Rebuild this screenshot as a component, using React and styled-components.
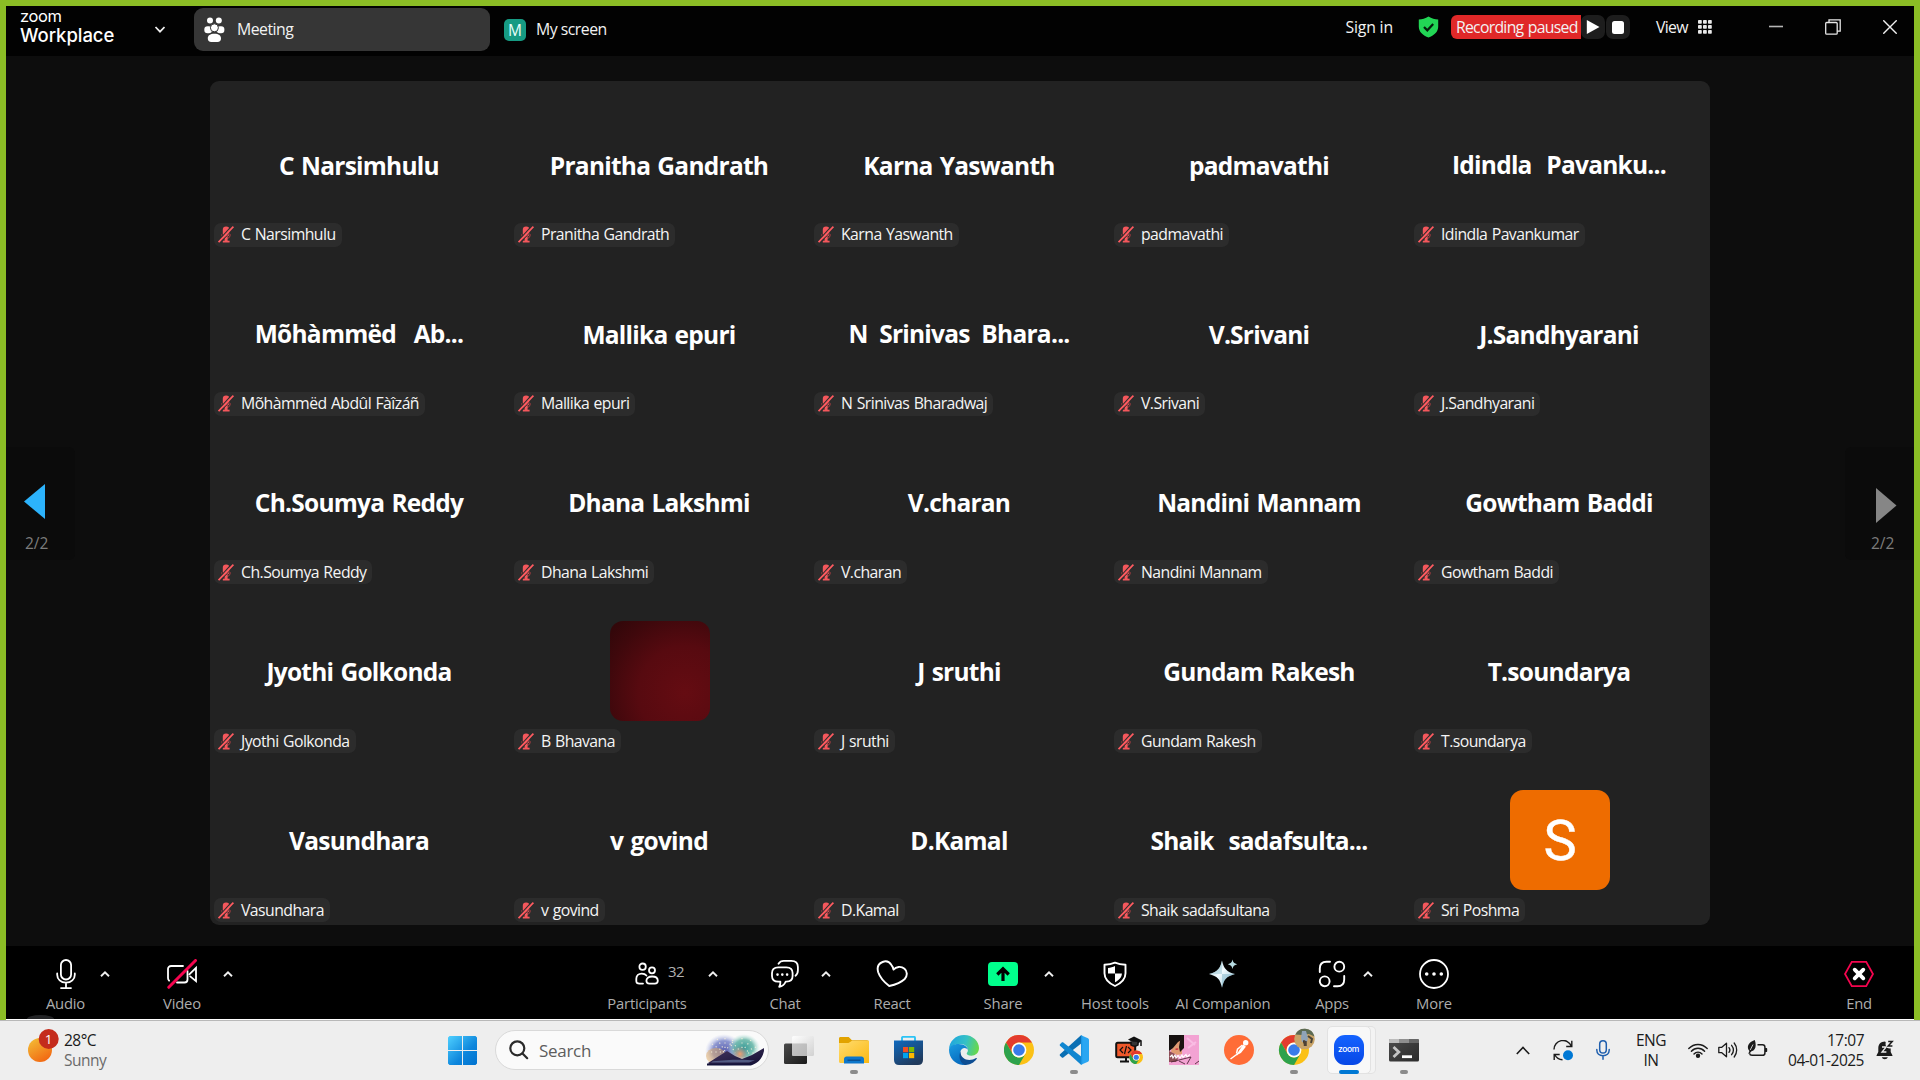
import React from "react";
import styled, { createGlobalStyle } from "styled-components";

const UI = `"Open Sans", "Noto Sans", sans-serif`;

const Global = createGlobalStyle`
  * { box-sizing: border-box; }
  html, body { margin: 0; padding: 0; background: #000; }
  body { font-family: ${UI}; overflow: hidden; }
  svg { display: block; flex: none; }
`;

const Screen = styled.div`
  width: 1920px;
  height: 1080px;
  display: flex;
  flex-direction: column;
  overflow: hidden;
`;

const Window = styled.div`
  height: 1020px;
  border: 6px solid #8bbd25;
  border-bottom: 0;
  background: #0d0d0d;
  display: flex;
  flex-direction: column;
`;

/* ---------- title bar ---------- */

const TitleBar = styled.header`
  height: 50px;
  flex: none;
  background: #020202;
  display: flex;
  justify-content: space-between;
  align-items: flex-start;
`;

const TitleLeft = styled.div`
  height: 47px;
  display: flex;
  align-items: center;
`;

const TitleRight = styled.div`
  height: 42px;
  display: flex;
  align-items: center;
  padding-right: 17px;
`;

const Brand = styled.div`
  width: 135px;
  padding: 0 0 4px 14px;
  font-family: Inter, sans-serif;
  color: #fff;
  white-space: nowrap;
`;

const BrandTop = styled.div`
  font-size: 16.5px;
  line-height: 15px;
  font-weight: 400;
  letter-spacing: -0.4px;
`;

const BrandBottom = styled.div`
  font-size: 18.5px;
  line-height: 23px;
  font-weight: 500;
  letter-spacing: -0.05px;
`;

const ActiveTab = styled.div`
  width: 296px;
  height: 43px;
  margin-left: 29px;
  padding-left: 10px;
  border-radius: 9px;
  background: #363636;
  display: flex;
  align-items: center;
  gap: 12px;
`;

const ScreenTab = styled.div`
  margin-left: 14px;
  display: flex;
  align-items: center;
  gap: 10px;
`;

const Initial = styled.div`
  width: 22px;
  height: 22px;
  border-radius: 5px;
  background: #169b83;
  color: #e9fffa;
  font-size: 15.5px;
  line-height: 22px;
  text-align: center;
`;

const BarText = styled.span`
  font-size: 15.8px;
  line-height: 22px;
  letter-spacing: -0.6px;
  margin-bottom: 1px;
  color: #f2f2f2;
  white-space: nowrap;
`;

const TabText = styled(BarText)`
  letter-spacing: -0.5px;
`;

const SignIn = styled(BarText)`
  letter-spacing: -0.2px;
  margin-bottom: 0;
`;

const Recording = styled.div`
  height: 24px;
  margin: 0 0 0 12px;
  padding: 0 5px;
  width: 130px;
  border-radius: 6px 0 0 6px;
  background: #e02828;
  display: flex;
  align-items: center;
`;

const RecordingText = styled(BarText)`
  letter-spacing: -0.72px;
  word-spacing: 1px;
`;

const MediaButton = styled.div`
  width: 24px;
  height: 24px;
  margin-right: 1px;
  border-radius: 7px;
  background: #1d1d1d;
  display: flex;
  align-items: center;
  justify-content: center;
`;

const View = styled.div`
  margin: 0 57px 0 25px;
  display: flex;
  align-items: center;
  gap: 10px;
`;

const WindowButtons = styled.div`
  display: flex;
  align-items: center;
  gap: 42px;
  padding-bottom: 1px;
`;

/* ---------- gallery ---------- */

const Stage = styled.main`
  height: 890px;
  flex: none;
  padding-top: 25px;
  display: flex;
  justify-content: space-between;
  align-items: flex-start;
`;

const Pager = styled.div`
  width: 69px;
  height: 113px;
  margin-top: 366px;
  background: #0b0b0b;
  border-radius: ${(p) => (p.$right ? "6px 0 0 6px" : "0 6px 6px 0")};
  padding: ${(p) => (p.$right ? "41px 0 0 31px" : "37px 0 0 18px")};
  display: flex;
  flex-direction: column;
  align-items: flex-start;
`;

const PageCount = styled.span`
  font-size: 15.5px;
  line-height: 20px;
  color: #7c7c7c;
  margin: ${(p) => (p.$right ? "10px 0 0 -5px" : "14px 0 0 1px")};
`;

const Gallery = styled.section`
  width: 1500px;
  height: 844px;
  border-radius: 9px;
  background: #222222;
  display: grid;
  grid-template-columns: repeat(5, 1fr);
  grid-template-rows: repeat(5, 1fr);
`;

const Tile = styled.article`
  position: relative;
  display: flex;
  align-items: center;
  justify-content: center;
`;

const BigName = styled.h2`
  margin: 0;
  font-size: 24.5px;
  line-height: 34px;
  font-weight: 700;
  letter-spacing: -0.75px;
  color: #fff;
  white-space: nowrap;
  word-spacing: ${(p) => p.$ws || 1.5}px;
  padding: ${(p) => (p.$ws ? 0 : 1)}px 2px 0 0;
`;

const NameTag = styled.div`
  position: absolute;
  left: 4px;
  bottom: 3px;
  height: 24px;
  padding: 0 6px 0 4px;
  border-radius: 7px;
  background: #2c2c2c;
  display: flex;
  align-items: center;
  gap: 7px;
`;

const TagText = styled.span`
  font-size: 15.8px;
  line-height: 25px;
  letter-spacing: -0.55px;
  word-spacing: 0.8px;
  color: #f5f5f5;
  white-space: nowrap;
`;

const Avatar = styled.div`
  width: 100px;
  height: 100px;
  margin-bottom: 1px;
  border-radius: 13px;
`;

const PhotoAvatar = styled(Avatar)`
  background: radial-gradient(circle at 75% 72%, #650c12 0%, #570a10 45%, #3f080c 75%, #2e0709 100%);
`;

const LetterAvatar = styled(Avatar)`
  background: #ee6c00;
  color: #fff;
  font-family: Roboto, sans-serif;
  font-size: 56px;
  font-weight: 400;
  -webkit-text-stroke: 0.4px #fff;
  line-height: 102px;
  text-align: center;
`;

/* ---------- meeting toolbar ---------- */

const Toolbar = styled.footer`
  position: relative;
  height: 74px;
  flex: none;
  background: #000;
  border-bottom: 1px solid #fff;
  padding-top: 13px;
  display: flex;
  align-items: flex-start;
`;

const Tool = styled.div`
  width: ${(p) => p.$w || 60}px;
  margin-left: ${(p) => p.$ml}px;
  flex: none;
  display: flex;
  flex-direction: column;
  align-items: center;
  gap: 4px;
`;

const ToolIcon = styled.div`
  position: relative;
  height: 30px;
  display: flex;
  align-items: center;
`;

const ToolLabel = styled.span`
  font-size: 14.8px;
  line-height: 21px;
  font-weight: 500;
  letter-spacing: -0.2px;
  color: #adadad;
  white-space: nowrap;
`;

const Count = styled.span`
  position: absolute;
  left: 33px;
  top: 2px;
  font-size: 15px;
  line-height: 20px;
  letter-spacing: -0.6px;
  color: #b0b0b0;
`;

const Caret = styled.div`
  width: 10px;
  flex: none;
  margin: 11px 0 0 ${(p) => p.$ml}px;
`;

const HiddenHandle = styled.div`
  position: absolute;
  left: 21px;
  bottom: 0;
  width: 27px;
  height: 4px;
  border-radius: 14px 14px 0 0 / 4px 4px 0 0;
  background: #232426;
`;

/* ---------- taskbar ---------- */

const Taskbar = styled.nav`
  height: 60px;
  flex: none;
  border-top: 1px solid #b8b8b8;
  background: #eeeeee;
  padding-bottom: 1px;
  display: flex;
  align-items: center;
`;

const Weather = styled.div`
  width: 448px;
  padding-left: 28px;
  display: flex;
  align-items: center;
  gap: 4px;
`;

const WeatherIcon = styled.div`
  margin-bottom: 8px;
`;

const TextStack = styled.div`
  width: ${(p) => p.$w || "auto"};
  margin-left: ${(p) => p.$ml || 0}px;
  margin-bottom: ${(p) => (p.$mb === undefined ? 1 : p.$mb)}px;
  text-align: ${(p) => p.$align || "left"};
  font-size: 15.5px;
  line-height: 20px;
  letter-spacing: ${(p) => p.$ls || "-0.5px"};
  color: #1b1b1b;
  white-space: nowrap;
`;

const Muted = styled.div`
  color: #6a6a6a;
`;

const Search = styled.div`
  width: 274px;
  height: 40px;
  margin-left: 18px;
  padding: 0 3px 0 13px;
  border: 1px solid #d9d9d9;
  border-radius: 20px;
  background: #fafafa;
  display: flex;
  align-items: center;
  overflow: hidden;
`;

const SearchText = styled.span`
  flex: 1;
  margin: 1px 0 0 10px;
  font-size: 17px;
  line-height: 22px;
  letter-spacing: -0.3px;
  color: #5d5d5d;
`;

const Apps = styled.div`
  display: flex;
  margin-left: 2px;
`;

const AppSlot = styled.div`
  position: relative;
  width: 55px;
  height: 48px;
  display: flex;
  align-items: center;
  justify-content: center;
`;

const ActivePlate = styled.div`
  width: 44px;
  height: 48px;
  border-radius: 5px;
  background: #f8f8f8;
  border: 1px solid #e2e2e2;
  box-shadow: 5px 0 0 -1px #f3f3f3, 5px 0 0 0 #e2e2e2;
  display: flex;
  align-items: center;
  justify-content: center;
`;

const RunMark = styled.i`
  position: absolute;
  bottom: 0;
  width: ${(p) => (p.$active ? 20 : 8)}px;
  height: 4px;
  border-radius: 2px;
  background: ${(p) => (p.$active ? "#0078d4" : "#8a8a8a")};
`;

const ZoomIcon = styled.div`
  width: 30px;
  height: 30px;
  border-radius: 11px;
  background: linear-gradient(#1463ff, #0747e6);
  color: #fff;
  font-family: Inter, sans-serif;
  font-size: 8.5px;
  font-weight: 500;
  letter-spacing: -0.3px;
  line-height: 28px;
  text-align: center;
`;

const TrayIcon = styled.div`
  margin-left: ${(p) => p.$ml}px;
  margin-bottom: ${(p) => p.$up || 0}px;
`;

/* ---------- icons ---------- */

const MicOff = () => (
  <svg width="16" height="17" viewBox="0 0 16 17">
    <rect x="4.800" y="0.600" width="6.600" height="10" rx="3.200" fill="#f4575c" />
    <path d="M3.600 8.200c.2 3 1.900 4.200 4.400 4.200s4.200-1.200 4.400-4.200" fill="none" stroke="#8f3a3d" strokeWidth="1.200" />
    <path d="M8.100 10.500v4.800" stroke="#f4575c" strokeWidth="3" />
    <path d="M4.800 15.600h6.800" stroke="#f4575c" strokeWidth="1.800" />
    <path d="M.2 15 14-.2" stroke="#2c2c2c" strokeWidth="1.300" />
    <path d="M2 17.200 15.800 2.200" stroke="#2c2c2c" strokeWidth="1" />
    <path d="M.6 16.200 15.400.6" stroke="#ff5b61" strokeWidth="1.700" />
  </svg>
);

const Up = () => (
  <svg width="10" height="8" viewBox="0 0 10 8">
    <path d="M1 6.2 5 2.4l4 3.8" fill="none" stroke="#f0f0f0" strokeWidth="1.9" />
  </svg>
);

const Line = ({ w, h, children, sw = 2 }) => (
  <svg width={w} height={h} viewBox={`0 0 ${w} ${h}`} fill="none" stroke="#fff" strokeWidth={sw} strokeLinecap="round" strokeLinejoin="round">
    {children}
  </svg>
);

const AudioIcon = () => (
  <Line w={20} h={30} sw={1.8}>
    <rect x="4.9" y="1" width="10.2" height="19.5" rx="5.1" />
    <path d="M1.2 14.5v1.2c0 4.6 3.6 8 8.8 8s8.8-3.4 8.8-8v-1.2M10 23.7V29M5 29.1h10" />
  </Line>
);

const VideoIcon = () => (
  <Line w={30} h={30} sw={1.8}>
    <path d="M16 7H4.2C2.2 7 1 8.200 1 10v9c0 1.200.4 2 1.100 2.700M10 23.500h7.500c2 0 3-1 3-3V12" />
    <path d="M22.300 15.300 29 8.800v13.400l-5.800-4.800" strokeLinejoin="miter" />
    <path d="M1.800 28.300 28.500 1.500" stroke="#f5054f" strokeWidth="3" />
  </Line>
);

const PeopleIcon = () => (
  <Line w={24} h={24} sw={1.8}>
    <circle cx="7.600" cy="4.700" r="3.200" />
    <circle cx="17" cy="8.300" r="3" />
    <path d="M8 21.600H4.500C2.500 21.600 1.300 20.600 1.300 19v-2.200c0-3.200 2.400-5.200 5.500-5.200 2 0 3.600.600 4.600 1.900" />
    <path d="M11.400 18.800c0-2.500 2-4.300 5.700-4.300s5.700 1.800 5.700 4.300c0 1.900-1.100 2.800-3 2.800h-5.400c-1.900 0-3-.900-3-2.800z" />
  </Line>
);

const ChatIcon = () => (
  <Line w={28} h={30} sw={1.8}>
    <path d="M7.500 4.800C8.600 2.900 10.300 1.900 12.800 1.900h7.500c4.300 0 6.600 2.300 6.600 6.200v3.200c0 2.500-.7 4.200-2.400 5.400" />
    <path d="M7.200 8.300h8.200c4 0 6.200 2.200 6.200 5.800v3c0 3.600-2.200 5.600-6.200 5.600h-.8c-1 2.600-3.200 4.500-6.400 5.100 1-1.400 1.300-3 1.200-5.100H7.200C3.200 22.700 1 20.700 1 17.100v-3c0-3.600 2.200-5.800 6.200-5.800z" />
    <path d="M6.500 15.600h.01M11.300 15.600h.01M16.100 15.600h.01" strokeWidth="2.600" />
  </Line>
);

const HeartIcon = () => (
  <Line w={32} h={28} sw={1.9}>
    <path d="M15.300 4.800C13.300 1.800 9.800.700 6.600 2 2.300 3.700.900 7.800 2.200 12.200 4 17.600 8.500 22.300 13.200 26c6-1.300 12-3.600 15.500-7 3-3.200 2.700-7.800-.2-10.200C25 5.800 20 6.600 17.500 9.600c-.3-1.900-1-3.500-2.200-4.800z" />
  </Line>
);

const ShareIcon = () => (
  <svg width="30" height="24" viewBox="0 0 30 24">
    <rect width="30" height="24" rx="4" fill="#00ff8c" />
    <path d="M15 19V7M9.300 12.500 15 6.800l5.700 5.700" fill="none" stroke="#000" strokeWidth="3.200" />
  </svg>
);

const ShieldIcon = () => (
  <svg width="24" height="26" viewBox="0 0 24 26">
    <path d="M12 1.600C9 2.900 5.500 3.600 1.500 3.700v8.500c0 6 4.500 10 10.500 12.800 6-2.800 10.500-6.800 10.500-12.800V3.700C18.500 3.600 15 2.900 12 1.600z" fill="none" stroke="#fff" strokeWidth="1.900" strokeLinejoin="round" />
    <path d="M12 5v7.500H5V7c2.600-.200 5-.900 7-2zM12 12.500h6.900c-.1 3.800-2.800 6.700-6.900 8.800z" fill="#fff" />
  </svg>
);

const SparkIcon = () => (
  <svg width="30" height="30" viewBox="0 0 30 30">
    <defs>
      <linearGradient id="sparkA" x1="0" y1="0" x2="1" y2="1">
        <stop offset="0" stopColor="#8fb9c6" />
        <stop offset=".45" stopColor="#f2fbff" />
        <stop offset="1" stopColor="#8fc0d2" />
      </linearGradient>
    </defs>
    <path d="M14 1.500c2 8.500 4.500 11.300 13 13.600-8.500 2.300-11 5-13 13.600C12 20.100 9.500 17.400 1 15.100 9.500 12.800 12 10 14 1.500z" fill="url(#sparkA)" />
    <path d="M14 1.500v13.600L1 15.100C9.500 12.800 12 10 14 1.500z" fill="#a8cfdb" opacity=".6" />
    <path d="M14 28.700V15.100h13c-8.500 2.300-11 5-13 13.600z" fill="#7fb3c8" opacity=".5" />
    <path d="M24.500.500c.7 3 1.700 4 4.700 4.700-3 .8-4 1.700-4.700 4.700-.700-3-1.700-3.900-4.700-4.700 3-.700 4-1.700 4.700-4.700z" fill="#b7dbe2" />
  </svg>
);

const AppsIcon = () => (
  <Line w={28} h={28} sw={1.9}>
    <circle cx="21.300" cy="6.700" r="4.900" />
    <circle cx="6.700" cy="21.300" r="4.900" />
    <path d="M1.800 12V8.500c0-4.300 2.400-6.700 6.700-6.700H12M16 26.200h3.500c4.300 0 6.700-2.400 6.700-6.700V16" />
  </Line>
);

const MoreIcon = () => (
  <Line w={30} h={30} sw={1.8}>
    <circle cx="15" cy="15" r="14" />
    <path d="M7.700 15h.01M15 15h.01M22.300 15h.01" strokeWidth="3.600" />
  </Line>
);

const EndIcon = () => (
  <Line w={30} h={30} sw={1.8}>
    <path d="M7.800 2.800h14.400L29 15l-6.800 12.200H7.800L1 15z" stroke="#f5054f" strokeLinejoin="miter" />
    <path d="m10.700 10.700 8.600 8.600M19.300 10.700l-8.600 8.600" strokeWidth="3.800" />
  </Line>
);

const MeetingIcon = () => (
  <svg width="21" height="26" viewBox="0 0 21 26" fill="#fff">
    <circle cx="6" cy="3.600" r="3" />
    <circle cx="14.800" cy="3.600" r="3" />
    <rect x=".3" y="9.300" width="7.700" height="7" rx="3.300" />
    <rect x="12.700" y="9.300" width="7.700" height="7" rx="3.300" />
    <circle cx="10.400" cy="10.800" r="4" stroke="#363636" strokeWidth="1" />
    <path d="M3.800 21.400c0-2.900 2.400-4.600 6.600-4.600s6.600 1.700 6.600 4.600c0 2.300-1.200 3.500-3.500 3.500H7.300c-2.300 0-3.500-1.200-3.500-3.500z" />
  </svg>
);

const SafeIcon = () => (
  <svg width="21" height="22" viewBox="0 0 21 22">
    <path d="M10.500.4C7.500 2.300 4 3.300.8 3.500v7.300c0 5.200 4.200 8.700 9.700 10.800 5.500-2.100 9.700-5.600 9.700-10.800V3.500C17 3.300 13.500 2.300 10.500.4z" fill="#22d655" />
    <path d="m6 11 3.300 3.300 5.900-6.300" fill="none" stroke="#04200c" strokeWidth="2.200" />
  </svg>
);

const GridIcon = () => (
  <svg width="14" height="14" viewBox="0 0 14 14" fill="#e8e8e8">
    {[0, 5, 10].map((y) => [0, 5, 10].map((x) => <rect key={`${x}-${y}`} x={x} y={y} width="3.800" height="3.800" rx=".8" />))}
  </svg>
);

const Sunny = () => (
  <svg width="32" height="34" viewBox="0 0 32 34">
    <defs>
      <linearGradient id="sun" x1=".2" y1="0" x2=".8" y2="1">
        <stop offset="0" stopColor="#f3bb35" />
        <stop offset="1" stopColor="#f2620f" />
      </linearGradient>
    </defs>
    <circle cx="12" cy="21" r="12" fill="url(#sun)" />
    <circle cx="20.700" cy="10" r="10" fill="#c42b1c" />
    <text x="20.700" y="14.800" fontSize="13.500" textAnchor="middle" fill="#fff" fontFamily="Open Sans, sans-serif">1</text>
  </svg>
);

const WindowsLogo = () => (
  <svg width="29" height="29" viewBox="0 0 29 29">
    <defs>
      <linearGradient id="win" gradientUnits="userSpaceOnUse" x1="0" y1="0" x2="29" y2="29">
        <stop offset="0" stopColor="#4fd0ff" />
        <stop offset=".6" stopColor="#0d86dc" />
        <stop offset="1" stopColor="#0072cf" />
      </linearGradient>
    </defs>
    <path fill="url(#win)" d="M1.500 0H14v14H0V1.500zM15 0h12.500L29 1.500V14H15zM0 15h14v14H1.500L0 27.500zM15 15h14v12.500L27.500 29H15z" />
  </svg>
);

const Magnifier = () => (
  <svg width="20" height="20" viewBox="0 0 20 20" fill="none" stroke="#2a2a2a" strokeWidth="2.200" strokeLinecap="round">
    <circle cx="8.300" cy="8.300" r="7" />
    <path d="m13.500 13.500 4.700 4.700" />
  </svg>
);

const NightScene = () => (
  <svg width="61" height="32" viewBox="0 0 61 32">
    <defs>
      <radialGradient id="burstA"><stop offset="0" stopColor="#5a5fae" /><stop offset=".6" stopColor="#7b86c9" stopOpacity=".85" /><stop offset="1" stopColor="#c5cbf0" stopOpacity="0" /></radialGradient>
      <radialGradient id="burstB"><stop offset="0" stopColor="#3a9b98" /><stop offset=".6" stopColor="#64b5a6" stopOpacity=".85" /><stop offset="1" stopColor="#bfe8df" stopOpacity="0" /></radialGradient>
      <radialGradient id="glow"><stop offset="0" stopColor="#f0a070" /><stop offset="1" stopColor="#b07880" stopOpacity="0" /></radialGradient>
      <linearGradient id="hill" x1="0" y1="0" x2="1" y2="1"><stop offset="0" stopColor="#463660" /><stop offset="1" stopColor="#120f33" /></linearGradient>
    </defs>
    <ellipse cx="20" cy="17" rx="19" ry="17" fill="url(#burstA)" />
    <ellipse cx="40" cy="14" rx="16" ry="14" fill="url(#burstB)" />
    <ellipse cx="12" cy="22" rx="10" ry="8" fill="#dda860" opacity=".5" />
    <circle cx="36" cy="20" r="8" fill="url(#glow)" />
    <g stroke="#f9f3dc" strokeWidth="1.100" strokeDasharray="1.200 3.200" opacity=".9">
      <path d="m8 10 12 8M13 5l8 12M21 4v12M29 6l-7 10M7 18h10M28 8l8 9M38 4v12M47 6l-8 10M52 13l-11 5M44 19h9M27 11l4 8" />
    </g>
    <path d="m4 29 11-7 8-5 8 5 7 3 10-4 12-7v3c-2 9-7 13-14 14H6z" fill="url(#hill)" />
    <path d="M9 27.300c14-2 32-2 42-1l-6 2.200H7z" fill="#5d6a92" opacity=".8" />
    <path d="M3 29.500h48l-4 2H3z" fill="#15143c" />
  </svg>
);

const TaskView = () => (
  <svg width="30" height="29" viewBox="0 0 30 29">
    <defs>
      <linearGradient id="tvA" x1="0" y1="0" x2="1" y2="1"><stop offset="0" stopColor="#4a4a4a" /><stop offset="1" stopColor="#1a1a1a" /></linearGradient>
      <linearGradient id="tvB" x1="0" y1="0" x2="1" y2="1"><stop offset="0" stopColor="#fff" /><stop offset="1" stopColor="#cfcfcf" /></linearGradient>
    </defs>
    <rect x="0" y="7.500" width="23" height="20.500" rx="1.500" fill="url(#tvA)" />
    <rect x="8" y="0" width="22" height="20" rx="1.500" fill="url(#tvB)" opacity=".93" />
    <path d="M8 7.500h15V20H8z" fill="#a9a9a9" opacity=".55" />
  </svg>
);

const Explorer = () => (
  <svg width="30" height="27" viewBox="0 0 30 27">
    <defs><linearGradient id="fold" x1="0" y1="0" x2="1" y2="1"><stop offset="0" stopColor="#ffdc70" /><stop offset="1" stopColor="#fbb912" /></linearGradient></defs>
    <path d="M0 1.500C0 .6.600 0 1.500 0h8.200l3.200 3.300H28c1.200 0 2 .7 2 1.700v6H0z" fill="#e2a300" />
    <path d="M0 6h9.500L13 3.800h17V26H1.500C.6 26 0 25.400 0 24.500z" fill="url(#fold)" />
    <path d="M5 26.500V22c0-1.600 1.100-2.600 2.600-2.600h14.800c1.500 0 2.600 1 2.600 2.600v4.500z" fill="#0e77cb" />
    <path d="M8.500 23.200h13" stroke="#0b4b8a" strokeWidth="1.300" />
  </svg>
);

const Store = () => (
  <svg width="29" height="29" viewBox="0 0 29 29">
    <defs><linearGradient id="bag" x1="0" y1="0" x2=".6" y2="1"><stop offset="0" stopColor="#0f6abf" /><stop offset="1" stopColor="#203a5c" /></linearGradient></defs>
    <path d="M8 6V1.800C8 1.200 8.400.9 9 .9h11c.6 0 1 .3 1 .9V6" fill="none" stroke="#2cc3f5" strokeWidth="1.900" />
    <path d="M0 4.500h29V24c0 3-1.800 5-5 5H5c-3.200 0-5-2-5-5z" fill="url(#bag)" />
    <rect x="9" y="11" width="5.200" height="5.200" fill="#f25022" /><rect x="15" y="11" width="5.200" height="5.200" fill="#7fba00" />
    <rect x="9" y="17" width="5.200" height="5.200" fill="#00a4ef" /><rect x="15" y="17" width="5.200" height="5.200" fill="#ffb900" />
  </svg>
);

const Edge = () => (
  <svg width="30" height="30" viewBox="0 0 30 30">
    <defs>
      <linearGradient id="edA" x1="0" y1=".3" x2="1" y2=".5"><stop offset="0" stopColor="#1fa5e0" /><stop offset=".55" stopColor="#35c1c5" /><stop offset="1" stopColor="#68d84b" /></linearGradient>
      <linearGradient id="edB" x1="0" y1="0" x2=".5" y2="1"><stop offset="0" stopColor="#1b9de2" /><stop offset="1" stopColor="#0669bd" /></linearGradient>
    </defs>
    <path d="M0 15C0 6 7 0 15 0c9 0 15 6.500 15 13 0 5-3.800 7.700-7.600 7.700-3 0-4.700-1-4.700-2.100 0-.8 1.200-1.300 1.200-3.600 0-3-3-6-7.400-6C5.500 9 0 12 0 15z" fill="url(#edA)" />
    <path d="M0 14.800C.4 11 4.500 8.900 9.500 8.900c5.500 0 9.200 2.900 9.400 6-1.300-2-4-2.600-6-.8-3.700 3.300-1.500 11.500 7 14.200C17.800 29.600 16 30 14 30 6 29.500 0 23 0 14.800z" fill="url(#edB)" />
    <path d="M11.700 16.300c-.8 5 3.300 8.700 8.700 8.700 2.500 0 4.800-.700 6.700-1.900.5-.2.900.2.600.7C25 28 20 30.300 15.500 29.900 10 27 9.500 20 11.700 16.300z" fill="#0d4d92" />
  </svg>
);

const ChromeMark = () => (
  <>
    <circle cx="15" cy="15" r="15" fill="#fbc116" />
    <path d="M2 7.500A15 15 0 0 1 28 7.500H15a7.500 7.500 0 0 0-6.500 11.200z" fill="#e33b2e" />
    <path d="M2 7.500 8.500 18.800A7.500 7.500 0 0 0 21.500 18.700L15 30A15 15 0 0 1 2 7.500z" fill="#2da24c" />
    <circle cx="15" cy="15" r="7.400" fill="#fff" />
    <circle cx="15" cy="15" r="5.800" fill="#3a7bea" />
  </>
);

const Chrome = () => (
  <svg width="30" height="30" viewBox="0 0 30 30">
    <ChromeMark />
  </svg>
);

const VSCode = () => (
  <svg width="30" height="30" viewBox="0 0 30 30">
    <path d="m22 .3 7 3c.6.300 1 .9 1 1.500v20.400c0 .6-.4 1.200-1 1.500l-7 3z" fill="#2aa6f2" />
    <path d="M22 .3 1 19.200c-.5.500-.5 1.100 0 1.600l1.800 1.600c.5.400 1 .4 1.500.1L22.500 8.200z" fill="#0a6fb3" />
    <path d="M22 29.700 1 10.800c-.5-.5-.5-1.100 0-1.600l1.800-1.600c.5-.4 1-.4 1.500-.1l18.200 14.300z" fill="#1086d0" />
    <path d="M22 .3v29.400c.5 0 .9-.2 1.200-.5V.8c-.3-.3-.7-.5-1.200-.5z" fill="#1d95e2" />
  </svg>
);

const CodeLearn = () => (
  <svg width="28" height="28" viewBox="0 0 28 28">
    <rect x="1.200" y="6.700" width="19" height="14.600" rx="1.500" fill="#f0582a" stroke="#111" strokeWidth="2" />
    <path d="M11 21v4M5 25.600h9" stroke="#111" strokeWidth="2" />
    <path d="m8 11-3 3 3 3M13 11l3 3-3 3M11.500 10l-2 8" stroke="#111" strokeWidth="1.200" fill="none" />
    <path d="M13 3.500 19 .5l8 4-5 4z" fill="#111" />
    <path d="M16 5.500v3.500c2 1.500 5 1.500 7 0V6M26 5v5" stroke="#111" strokeWidth="1.500" fill="#333" />
    <g transform="translate(14.500 14.500) scale(.45)">
      <ChromeMark />
    </g>
  </svg>
);

const PinkArt = () => (
  <svg width="30" height="30" viewBox="0 0 30 30">
    <rect width="30" height="30" fill="#f3a3d3" />
    <path d="M4 6h9v13l-5 1-6-3z" fill="#e09a72" />
    <path d="M0 0h14v4L9 7 4 13l-4 3z" fill="#15100f" />
    <path d="M12 0h3v13l-4 4-1-5z" fill="#1c1211" />
    <path d="M6 14c1.500-1 3-.8 3.500 0-.8 1.200-2.500 1.300-3.500 0z" fill="#cf3040" />
    <path d="M0 16l6 3 3 5-2 3H0z" fill="#8d4d56" />
    <path d="m1 22 2-2 1 3 2-3 1 3 2-2.500 2 2.500 2-3 1 2.500 3-3 1 2.500 3-2.500" stroke="#fff" strokeWidth="1.200" fill="none" />
    <path d="m2 27 20-5-4 7M10 26l6 3M26 29l4-3" stroke="#51293a" strokeWidth=".9" fill="none" />
    <path d="m18 3 8 7M19 13l8-6" stroke="#f9bde3" strokeWidth="2" />
  </svg>
);

const Postman = () => (
  <svg width="30" height="30" viewBox="0 0 30 30">
    <circle cx="15" cy="15" r="15" fill="#ff6c37" />
    <circle cx="21.700" cy="7.800" r="2.700" fill="#fff" />
    <path d="m19.300 9.200 2.600 2.600-5 6.300-2.300 1-.3-1.300-1.800 1.600z" fill="#fff" />
    <path d="m18.500 10-5 4.200-1 4.300M14 18.500 6.500 24M16 17l-3.500 3" stroke="#fff" strokeWidth="1.500" fill="none" />
  </svg>
);

const ChromeProfile = () => (
  <svg width="42" height="44" viewBox="0 0 42 44">
    <g transform="translate(6 7)">
      <ChromeMark />
    </g>
    <circle cx="31.500" cy="11" r="10.300" fill="#c9a468" />
    <path d="M22.300 6.500A10.300 10.300 0 0 1 41.500 8.500L36 6l-7 1z" fill="#5c6b54" />
    <path d="M29 3h4l2 7-1 4h-5l-1-4z" fill="#8fa3b8" />
    <path d="M30 13h1.500v5M33 13v5" stroke="#4d4236" strokeWidth="1.500" />
    <path d="m35 8 4 3-1 4" stroke="#4a4438" strokeWidth="2" fill="none" />
  </svg>
);

const Terminal = () => (
  <svg width="30" height="23" viewBox="0 0 30 23">
    <defs><linearGradient id="term" x1="0" y1="0" x2="1" y2="1"><stop offset="0" stopColor="#4c4c4c" /><stop offset="1" stopColor="#2b2b2b" /></linearGradient></defs>
    <rect width="30" height="22.500" rx="1.500" fill="url(#term)" />
    <path d="M0 1.500C0 .6.600 0 1.500 0H10v4H0z" fill="#bcbcbc" />
    <path d="M10 0h10v4H10z" fill="#8f8f8f" />
    <path d="M20 0h8.500c.9 0 1.500.6 1.500 1.500V4H20z" fill="#666" />
    <path d="m4.500 8 5.300 5-5.300 5" fill="none" stroke="#c4c4c4" strokeWidth="2.800" />
    <path d="M13 17.700h10" stroke="#fff" strokeWidth="2.800" />
  </svg>
);

const SyncIcon = () => (
  <svg width="21" height="21" viewBox="0 0 21 21" fill="none" stroke="#1b1b1b" strokeWidth="1.400">
    <path d="M1 9.500A9 9 0 0 1 18.300 6M18.800.8v5.700h-5.600" />
    <path d="M1.200 20v-5.500h5.500M1.800 14.800C3.300 17.700 6 19.600 9.500 19.700" />
    <circle cx="15" cy="15.200" r="5" fill="#0078d4" stroke="none" />
  </svg>
);

const BlueMic = () => (
  <svg width="14" height="20" viewBox="0 0 14 20" fill="none" stroke="#1f5fae" strokeWidth="1.500" strokeLinecap="round">
    <rect x="3.700" y=".8" width="6.600" height="12.200" rx="3.300" />
    <path d="M.8 9.500v.6c0 3.200 2.600 5.600 6.200 5.600s6.200-2.400 6.200-5.600v-.6M7 16v3.200" />
  </svg>
);

const Wifi = () => (
  <svg width="20" height="15" viewBox="0 0 20 15" fill="none" stroke="#1b1b1b" strokeWidth="1.400" strokeLinecap="round">
    <path d="M.8 5.600C6 .1 14 .1 19.200 5.600M3.400 8.300c3.700-4 9.500-4 13.200 0M6 11c2.200-2.500 5.800-2.500 8 0" />
    <circle cx="10" cy="12.700" r="1.500" fill="#1b1b1b" />
  </svg>
);

const Sound = () => (
  <svg width="20" height="16" viewBox="0 0 20 16" fill="none" stroke="#1b1b1b" strokeWidth="1.300" strokeLinecap="round" strokeLinejoin="round">
    <path d="M.8 5.300h3L8.500 1.200v13.600l-4.700-4.100h-3z" />
    <path d="M11 5.600c1.100 1.400 1.100 3.400 0 4.800M13.600 3.300c2.200 2.800 2.200 6.600 0 9.400M16.200 1c3.300 4.200 3.300 9.800 0 14" />
  </svg>
);

const Battery = () => (
  <svg width="21" height="18" viewBox="0 0 21 18">
    <path d="M10.500 4.700h5c1.500 0 2.400.9 2.400 2.400v5.800c0 1.500-.9 2.400-2.400 2.400H5c-1.300 0-2.200-.7-2.400-1.900" fill="none" stroke="#1b1b1b" strokeWidth="1.500" />
    <path d="M18 8h1.200c.7 0 1 .4 1 1v2c0 .6-.3 1-1 1H18z" fill="#1b1b1b" />
    <path d="M7.800 0C9.500 5 9 10.500 4.500 11.200L2 14l-.6-.5 1-2.500C-.5 8 .5 2.500 7.800 0z" fill="#1b1b1b" />
    <path d="M6 4.500 3.200 10" stroke="#eee" strokeWidth=".8" />
  </svg>
);

const Bell = () => (
  <svg width="18" height="20" viewBox="0 0 18 20">
    <path d="M9 1.500c-4.200 0-6.700 2.800-6.700 6.500v4L.6 15.200c-.2.500 0 .9.600.9h14.600c.6 0 .8-.4.600-.9L14.700 12V8" fill="#1b1b1b" />
    <path d="M5.800 17.300c.4 1.300 1.500 2 3 2s2.600-.7 3-2z" fill="#1b1b1b" />
    <path d="M6 7h4.200L6 12h4.400" fill="none" stroke="#eee" strokeWidth="1.300" />
    <circle cx="14" cy="4" r="4.500" fill="#eee" />
    <path d="M12.200 1.500h4L12.200 6h4.200" fill="none" stroke="#1b1b1b" strokeWidth="1.500" />
  </svg>
);

/* ---------- data ---------- */

const people = [
  { name: "C Narsimhulu" },
  { name: "Pranitha Gandrath" },
  { name: "Karna Yaswanth" },
  { name: "padmavathi" },
  { name: "Idindla Pavankumar", cut: "Idindla Pavanku...", ws: 9 },
  { name: "Mõhàmmëd Abdûl Fàîzáñ", cut: "Mõhàmmëd Ab...", ws: 12 },
  { name: "Mallika epuri" },
  { name: "N Srinivas Bharadwaj", cut: "N Srinivas Bhara...", ws: 6 },
  { name: "V.Srivani" },
  { name: "J.Sandhyarani" },
  { name: "Ch.Soumya Reddy" },
  { name: "Dhana Lakshmi" },
  { name: "V.charan" },
  { name: "Nandini Mannam" },
  { name: "Gowtham Baddi" },
  { name: "Jyothi Golkonda" },
  { name: "B Bhavana", photo: true },
  { name: "J sruthi" },
  { name: "Gundam Rakesh" },
  { name: "T.soundarya" },
  { name: "Vasundhara" },
  { name: "v govind" },
  { name: "D.Kamal" },
  { name: "Shaik sadafsultana", cut: "Shaik sadafsulta...", ws: 9 },
  { name: "Sri Poshma", letter: "S" },
];

const tools = [
  { label: "Audio", w: 61, ml: 29, icon: <AudioIcon />, caret: 4 },
  { label: "Video", ml: 42, icon: <VideoIcon />, caret: 11 },
  { label: "Participants", w: 100, ml: 364, icon: <PeopleIcon />, count: "32", caret: 11 },
  { label: "Chat", ml: 37, icon: <ChatIcon />, caret: 6 },
  { label: "React", ml: 31, icon: <HeartIcon /> },
  { label: "Share", ml: 51, icon: <ShareIcon />, caret: 11 },
  { label: "Host tools", w: 100, ml: 11, icon: <ShieldIcon /> },
  { label: "AI Companion", w: 110, ml: 3, icon: <SparkIcon /> },
  { label: "Apps", ml: 24, icon: <AppsIcon />, caret: 1 },
  { label: "More", ml: 31, icon: <MoreIcon /> },
  { label: "End", ml: 365, icon: <EndIcon /> },
];

const apps = [
  { id: "taskview", icon: <TaskView /> },
  { id: "explorer", icon: <Explorer />, run: true },
  { id: "store", icon: <Store /> },
  { id: "edge", icon: <Edge /> },
  { id: "chrome", icon: <Chrome /> },
  { id: "vscode", icon: <VSCode />, run: true },
  { id: "learn", icon: <CodeLearn /> },
  { id: "art", icon: <PinkArt /> },
  { id: "postman", icon: <Postman /> },
  { id: "profile", icon: <ChromeProfile />, run: true },
  { id: "zoom", icon: <ActivePlate><ZoomIcon>zoom</ZoomIcon></ActivePlate>, run: true, active: true },
  { id: "terminal", icon: <Terminal />, run: true },
];

function Participant({ person }) {
  return (
    <Tile>
      {person.photo ? (
        <PhotoAvatar />
      ) : person.letter ? (
        <LetterAvatar>{person.letter}</LetterAvatar>
      ) : (
        <BigName $ws={person.ws}>{person.cut || person.name}</BigName>
      )}
      <NameTag>
        <MicOff />
        <TagText>{person.name}</TagText>
      </NameTag>
    </Tile>
  );
}

export default function App() {
  return (
    <>
      <Global />
      <Screen>
        <Window>
          <TitleBar>
            <TitleLeft>
              <Brand>
                <BrandTop>zoom</BrandTop>
                <BrandBottom>Workplace</BrandBottom>
              </Brand>
              <svg width="24" height="12" viewBox="0 0 24 12">
                <path d="m14.500 3 4.500 4.700L23.500 3" fill="none" stroke="#eee" strokeWidth="1.700" />
              </svg>
              <ActiveTab>
                <MeetingIcon />
                <TabText>Meeting</TabText>
              </ActiveTab>
              <ScreenTab>
                <Initial>M</Initial>
                <TabText>My screen</TabText>
              </ScreenTab>
            </TitleLeft>
            <TitleRight>
              <SignIn>Sign in</SignIn>
              <svg width="46" height="22" viewBox="-25 0 46 22">
                <SafeIcon />
              </svg>
              <Recording>
                <RecordingText>Recording paused</RecordingText>
              </Recording>
              <MediaButton>
                <svg width="14" height="16" viewBox="0 0 14 16"><path d="M.8 1v14L13.500 8z" fill="#fff" /></svg>
              </MediaButton>
              <MediaButton>
                <svg width="12" height="13" viewBox="0 0 12 13"><rect width="12" height="13" rx="2.500" fill="#fff" /></svg>
              </MediaButton>
              <View>
                <BarText>View</BarText>
                <GridIcon />
              </View>
              <WindowButtons>
                <svg width="14" height="14" viewBox="0 0 14 14"><path d="M0 6.500h14" stroke="#b5b5b5" strokeWidth="1.600" /></svg>
                <svg width="16" height="16" viewBox="0 0 16 16" fill="none" stroke="#e6e6e6" strokeWidth="1.300">
                  <rect x=".7" y="3.500" width="11.500" height="11.700" rx="1" />
                  <path d="M4 3.500V.8h11.200v11.400h-3" />
                </svg>
                <svg width="14" height="14" viewBox="0 0 14 14"><path d="m.3.300 13.400 13.400M13.700.3.300 13.700" stroke="#f0f0f0" strokeWidth="1.400" /></svg>
              </WindowButtons>
            </TitleRight>
          </TitleBar>

          <Stage>
            <Pager>
              <svg width="21" height="35" viewBox="0 0 21 35"><path d="M0 17.500 21 0v35z" fill="#2cb3fc" /></svg>
              <PageCount>2/2</PageCount>
            </Pager>
            <Gallery>
              {people.map((p) => (
                <Participant key={p.name} person={p} />
              ))}
            </Gallery>
            <Pager $right>
              <svg width="21" height="35" viewBox="0 0 21 35"><path d="M20.500 17.500 0 0v35z" fill="#868686" /></svg>
              <PageCount $right>2/2</PageCount>
            </Pager>
          </Stage>

          <Toolbar>
            {tools.map((t) => (
              <React.Fragment key={t.label}>
                <Tool $w={t.w} $ml={t.ml}>
                  <ToolIcon>
                    {t.icon}
                    {t.count && <Count>{t.count}</Count>}
                  </ToolIcon>
                  <ToolLabel>{t.label}</ToolLabel>
                </Tool>
                {t.caret !== undefined && (
                  <Caret $ml={t.caret}>
                    <Up />
                  </Caret>
                )}
              </React.Fragment>
            ))}
            <HiddenHandle />
          </Toolbar>
        </Window>

        <Taskbar>
          <Weather>
            <WeatherIcon>
              <Sunny />
            </WeatherIcon>
            <TextStack>
              <div>28°C</div>
              <Muted>Sunny</Muted>
            </TextStack>
          </Weather>
          <WindowsLogo />
          <Search>
            <Magnifier />
            <SearchText>Search</SearchText>
            <NightScene />
          </Search>
          <Apps>
            {apps.map((a) => (
              <AppSlot key={a.id}>
                {a.icon}
                {a.run && <RunMark $active={a.active} />}
              </AppSlot>
            ))}
          </Apps>
          <TrayIcon $ml={85}>
            <svg width="14" height="9" viewBox="0 0 14 9"><path d="M.8 8 7 1.500 13.200 8" fill="none" stroke="#1b1b1b" strokeWidth="1.600" /></svg>
          </TrayIcon>
          <TrayIcon $ml={23}><SyncIcon /></TrayIcon>
          <TrayIcon $ml={22}><BlueMic /></TrayIcon>
          <TextStack $w="40px" $ml={21} $mb={0} $align="center">
            <div>ENG</div>
            <div>IN</div>
          </TextStack>
          <TrayIcon $ml={17}><Wifi /></TrayIcon>
          <TrayIcon $ml={10}><Sound /></TrayIcon>
          <TrayIcon $ml={9} $up={3}><Battery /></TrayIcon>
          <TextStack $w="96px" $align="right" $ls="-0.5px">
            <div>17:07</div>
            <div>04-01-2025</div>
          </TextStack>
          <TrayIcon $ml={12}><Bell /></TrayIcon>
        </Taskbar>
      </Screen>
    </>
  );
}
